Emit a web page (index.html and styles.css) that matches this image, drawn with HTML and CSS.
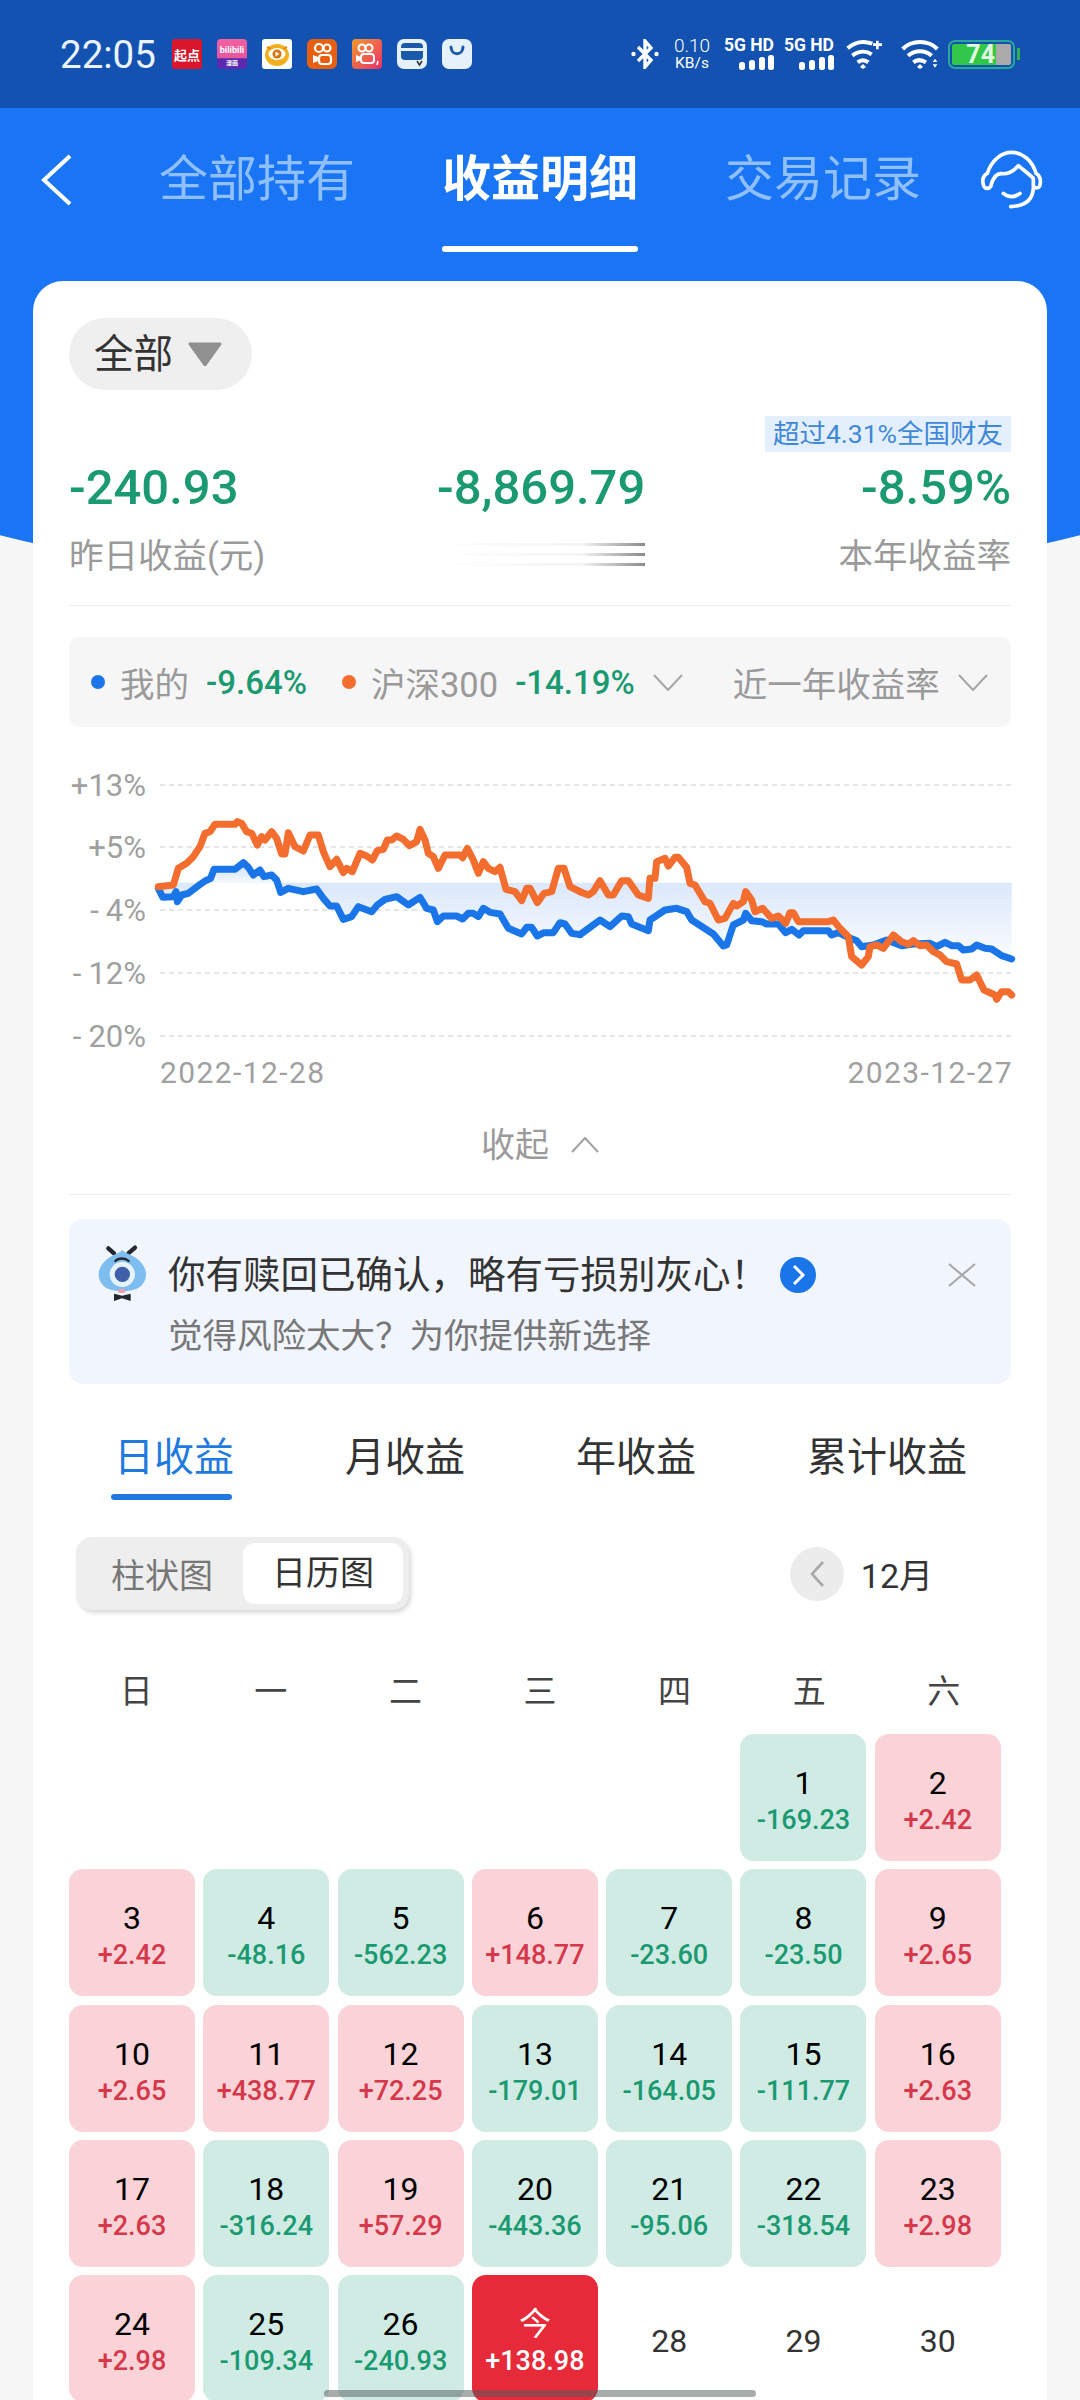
FILE: index.html
```html
<!DOCTYPE html>
<html lang="zh-CN">
<head>
<meta charset="utf-8">
<title>收益明细</title>
<link rel="stylesheet" href="styles.css">
</head>
<body>
<div class="page">

  <!-- status bar -->
  <div class="status">
    <span class="time">22:05</span>
    <div class="apps">
      <span class="app app-qd">起点</span>
      <span class="app app-bili"><i>bilibili</i><b>漫画</b></span>
      <svg class="app" viewBox="0 0 30 30"><rect width="30" height="30" rx="3" fill="#fff"/><ellipse cx="15" cy="16" rx="12" ry="11" fill="#f2b01e"/><path d="M5 8l4 2M25 8l-4 2" stroke="#e98b10" stroke-width="2"/><ellipse cx="15" cy="15" rx="8.500" ry="6" fill="#fff"/><circle cx="15" cy="15" r="4.500" fill="#d9740f"/><path d="M13.500 12.500v5l4-2.500z" fill="#fff"/></svg>
      <svg class="app" viewBox="0 0 30 30"><rect width="30" height="30" rx="6" fill="#e8600f"/><circle cx="12" cy="9" r="4" fill="none" stroke="#fff" stroke-width="2.200"/><circle cx="20" cy="9" r="3.500" fill="none" stroke="#fff" stroke-width="2.200"/><rect x="12" y="16" width="12" height="9" rx="3" fill="none" stroke="#fff" stroke-width="2.200"/><path d="M11 18l-5-2v8l5-2z" fill="#fff"/></svg>
      <svg class="app" viewBox="0 0 30 30"><defs><linearGradient id="ks" x1="0" y1="0" x2="1" y2="1"><stop offset="0" stop-color="#f29a2c"/><stop offset="1" stop-color="#ec2f6a"/></linearGradient></defs><rect width="30" height="30" rx="4" fill="url(#ks)"/><circle cx="10" cy="9" r="3.500" fill="none" stroke="#fff" stroke-width="2"/><circle cx="17" cy="9" r="3.500" fill="none" stroke="#fff" stroke-width="2"/><rect x="9" y="15" width="13" height="9" rx="3" fill="none" stroke="#fff" stroke-width="2"/><path d="M9 18l-5-2v7l5-2z" fill="#fff"/><path d="M26 22l-1 4" stroke="#fff" stroke-width="1.500"/></svg>
      <svg class="app" viewBox="0 0 30 30"><rect width="30" height="30" rx="7" fill="#e7f1fb"/><rect x="4" y="4" width="22" height="17" rx="4" fill="#1b5aa8"/><rect x="4" y="9" width="22" height="3" fill="#e7f1fb"/><path d="M20 22l2.500 4 2.500-4" fill="none" stroke="#333" stroke-width="1.500"/></svg>
      <svg class="app" viewBox="0 0 30 30"><rect width="30" height="30" rx="7" fill="#e7f1fb"/><path d="M9 8c0 9 12 9 12 0" fill="none" stroke="#1b5aa8" stroke-width="3" stroke-linecap="round"/></svg>
    </div>
    <div class="sys">
      <svg class="ic-bt" viewBox="0 0 28 30"><path d="M7 8l13 13-6 7V2l6 7L7 22" fill="none" stroke="#fff" stroke-width="3.400"/><circle cx="2.500" cy="15" r="2.200" fill="#fff"/><circle cx="25.500" cy="15" r="2.200" fill="#fff"/></svg>
      <div class="speed"><span>0.10</span><small>KB/s</small></div>
      <div class="sim"><span>5G HD</span><svg viewBox="0 0 35 15"><rect x="0" y="7" width="6" height="8" rx="2.500"/><rect x="10" y="5" width="6" height="10" rx="2.500"/><rect x="20" y="2" width="6" height="13" rx="2.500"/><rect x="29" y="0" width="6" height="15" rx="2.500"/></svg></div>
      <div class="sim"><span>5G HD</span><svg viewBox="0 0 35 15"><rect x="0" y="7" width="6" height="8" rx="2.500"/><rect x="10" y="5" width="6" height="10" rx="2.500"/><rect x="20" y="2" width="6" height="13" rx="2.500"/><rect x="29" y="0" width="6" height="15" rx="2.500"/></svg></div>
      <svg class="ic-wifi w1" viewBox="0 0 120 90"><path d="M8 28C30 8 55 4 82 14M22 50C40 36 62 34 80 46M38 70c10-8 22-8 32 0" fill="none" stroke="#fff" stroke-width="12"/><path d="M54 75l9 9-9 6-9-6z" fill="#fff"/><path d="M84 17h27M97 5v26" stroke="#fff" stroke-width="8"/></svg>
      <svg class="ic-wifi w2" viewBox="0 0 120 90"><path d="M8 30C35 2 85 2 112 30M24 50c21-18 51-18 71 0M40 70c10-8 25-8 38 0" fill="none" stroke="#fff" stroke-width="12"/><path d="M60 75l9 9-9 6-9-6z" fill="#fff"/><path d="M98 69h14l-7-10zM98 76h14l-7 10z" fill="#fff"/></svg>
      <div class="battery"><div class="bat-body"><span class="bat-fill">74</span><span class="bat-rest"></span></div><span class="bat-tip"></span></div>
    </div>
  </div>

  <!-- top nav -->
  <div class="nav">
    <svg class="back" viewBox="0 0 31 52"><path d="M29 2L3 26l26 24" fill="none" stroke="#fff" stroke-width="4"/></svg>
    <a class="nav-tab">全部持有</a>
    <a class="nav-tab on">收益明细</a>
    <a class="nav-tab">交易记录</a>
    <svg class="support" viewBox="0 0 240 210"><path d="M42 125C34 105 40 90 52 85 65 45 95 22 125 22c35 0 63 28 73 63 12 5 17 25 10 40-3 5-13 5-18 0v-25c-15-15-30-25-45-38-15 18-30 26-50 24-17-1-27 14-33 39-4 7-16 7-20 0z" fill="none" stroke="#fff" stroke-width="11" stroke-linejoin="round"/><path d="M190 130c-2 35-25 53-68 55M100 145c15 13 35 13 50 0" fill="none" stroke="#fff" stroke-width="11" stroke-linecap="round"/></svg>
  </div>

  <div class="card">
    <div class="pill"><span>全部</span><svg viewBox="0 0 36 24"><path d="M3 2h30L18 23z" fill="#909090" stroke="#909090" stroke-width="3" stroke-linejoin="round"/></svg></div>

    <div class="tag-row"><span class="tag">超过4.31%全国财友</span></div>

    <div class="stats">
      <div class="stat">
        <div class="val">-240.93</div>
        <div class="lab">昨日收益(元)</div>
      </div>
      <div class="stat">
        <div class="val">-8,869.79</div>
        <div class="blur"><i></i><i></i><i></i></div>
      </div>
      <div class="stat right">
        <div class="val">-8.59%</div>
        <div class="lab">本年收益率</div>
      </div>
    </div>

    <div class="legend">
      <span class="dot blue"></span><span class="lg-name">我的</span><span class="lg-val">-9.64%</span>
      <span class="dot orange"></span><span class="lg-name">沪深300</span><span class="lg-val">-14.19%</span>
      <svg class="chev" viewBox="0 0 30 17"><path d="M1 1l14 15L29 1" fill="none" stroke="#a6a6a6" stroke-width="2"/></svg>
      <span class="lg-name range">近一年收益率</span>
      <svg class="chev" viewBox="0 0 30 17"><path d="M1 1l14 15L29 1" fill="none" stroke="#a6a6a6" stroke-width="2"/></svg>
    </div>

    <!-- chart, drawn in page coordinates -->
    <svg class="chart" viewBox="69 727 950 383">
      <defs>
        <linearGradient id="area" gradientUnits="userSpaceOnUse" x1="0" y1="308" x2="0" y2="570"><stop offset="0" stop-color="#dbe8fa"/><stop offset="1" stop-color="#fff"/></linearGradient>
        <linearGradient id="hump" gradientUnits="userSpaceOnUse" x1="0" y1="268" x2="0" y2="310"><stop offset="0" stop-color="#d8e7fb"/><stop offset="1" stop-color="#f7faff"/></linearGradient>
      </defs>
      <g class="grid">
        <line x1="160" x2="1011" y1="785" y2="785"/>
        <line x1="160" x2="1011" y1="847" y2="847"/>
        <line x1="160" x2="1011" y1="910" y2="910"/>
        <line x1="160" x2="1011" y1="973" y2="973"/>
        <line x1="160" x2="1011" y1="1036" y2="1036"/>
      </g>
      <g class="axis">
        <text class="tick" x="146" y="796" text-anchor="end">+13%</text>
        <text class="tick" x="146" y="858" text-anchor="end">+5%</text>
        <text class="tick" x="146" y="921" text-anchor="end"><tspan>-</tspan><tspan dx="7">4%</tspan></text>
        <text class="tick" x="146" y="984" text-anchor="end"><tspan>-</tspan><tspan dx="7">12%</tspan></text>
        <text class="tick" x="146" y="1047" text-anchor="end"><tspan>-</tspan><tspan dx="7">20%</tspan></text>
        <text class="date" x="160" y="1083">2022-12-28</text>
        <text class="date" x="1013" y="1083" text-anchor="end">2023-12-27</text>
      </g>
      <g transform="translate(140 780) scale(.33333)">
        <polygon fill="url(#area)" points="55,308 55,325 68,352 100,350 108,335 112,365 125,345 145,340 175,317 195,303 212,295 222,268 285,268 310,248 325,262 340,285 360,270 372,290 395,285 410,300 422,337 445,325 490,335 530,327 550,355 570,378 590,378 610,418 635,410 655,380 695,395 712,375 735,358 770,350 805,375 840,352 860,385 880,390 892,425 910,408 950,408 968,417 985,400 1000,400 1015,410 1030,385 1050,397 1080,402 1105,445 1145,462 1160,442 1175,442 1192,468 1212,458 1240,458 1260,428 1275,432 1295,460 1320,464 1320,308"/>
        <polygon fill="url(#hump)" points="190,308 195,303 212,295 222,268 285,268 310,248 325,262 340,285 360,270 372,290 395,285 410,300 412,308"/>
      </g>
      <g transform="translate(580 780) scale(.33333)">
        <polygon fill="url(#area)" points="0,308 0,464 30,442 60,420 90,440 125,408 145,410 155,432 205,452 210,420 255,390 290,385 320,395 335,420 400,462 430,498 440,495 460,435 490,420 497,400 515,422 545,425 560,432 595,432 617,458 635,448 657,465 670,452 745,452 755,465 775,458 800,470 830,482 845,500 880,495 920,480 965,497 1000,492 1050,490 1070,500 1095,487 1115,497 1135,497 1150,510 1175,507 1190,495 1215,505 1235,507 1265,527 1295,537 1295,308"/>
      </g>
      <g class="line-blue">
        <polyline transform="translate(140 780) scale(.33333)" points="55,325 68,352 100,350 108,335 112,365 125,345 145,340 175,317 195,303 212,295 222,268 285,268 310,248 325,262 340,285 360,270 372,290 395,285 410,300 422,337 445,325 490,335 530,327 550,355 570,378 590,378 610,418 635,410 655,380 695,395 712,375 735,358 770,350 805,375 840,352 860,385 880,390 892,425 910,408 950,408 968,417 985,400 1000,400 1015,410 1030,385 1050,397 1080,402 1105,445 1145,462 1160,442 1175,442 1192,468 1212,458 1240,458 1260,428 1275,432 1295,460 1320,464"/>
        <polyline transform="translate(580 780) scale(.33333)" points="0,464 30,442 60,420 90,440 125,408 145,410 155,432 205,452 210,420 255,390 290,385 320,395 335,420 400,462 430,498 440,495 460,435 490,420 497,400 515,422 545,425 560,432 595,432 617,458 635,448 657,465 670,452 745,452 755,465 775,458 800,470 830,482 845,500 880,495 920,480 965,497 1000,492 1050,490 1070,500 1095,487 1115,497 1135,497 1150,510 1175,507 1190,495 1215,505 1235,507 1265,527 1295,537"/>
      </g>
      <g class="line-orange">
        <polyline transform="translate(140 780) scale(.33333)" points="55,320 100,315 115,265 140,250 160,230 180,200 195,160 210,155 225,133 285,133 292,125 305,130 320,155 335,160 352,195 365,170 375,180 395,155 410,175 425,222 435,222 445,158 465,200 490,213 510,165 535,165 550,215 570,260 590,238 610,278 620,265 637,275 660,220 680,228 697,240 712,212 730,208 742,180 755,180 770,168 790,178 808,197 830,185 840,148 855,180 865,220 880,230 895,265 915,225 960,225 968,233 982,205 1000,240 1015,280 1030,245 1045,265 1065,275 1080,262 1098,328 1125,335 1145,362 1160,325 1170,325 1192,368 1212,340 1235,335 1255,265 1272,265 1290,320 1320,335"/>
        <polyline transform="translate(580 780) scale(.33333)" points="0,335 25,345 40,335 60,302 85,345 100,345 125,302 145,302 175,345 205,355 210,295 225,295 230,245 255,235 265,258 285,232 295,232 320,262 330,310 345,315 375,365 390,370 415,420 435,415 460,370 470,378 490,365 497,335 515,360 525,395 548,385 575,415 595,408 617,430 630,398 640,398 655,425 745,425 760,420 780,445 805,470 815,530 845,555 865,530 870,500 890,495 910,505 940,465 965,485 985,493 1000,482 1020,497 1040,495 1060,515 1080,525 1100,545 1130,552 1145,600 1170,600 1190,585 1212,630 1245,645 1250,658 1265,635 1285,635 1295,645"/>
      </g>
    </svg>

    <div class="collapse"><span>收起</span><svg viewBox="0 0 28 16"><path d="M1 15L14 1l13 14" fill="none" stroke="#a0a0a0" stroke-width="2"/></svg></div>

    <div class="banner">
      <svg class="mascot" viewBox="0 0 210 225">
        <path d="M55 40l17 15M135 38l-20 17" stroke="#23262e" stroke-width="13" stroke-linecap="round"/>
        <path d="M97 45c8 10 35 16 52 33 30 30 22 64-5 82-26 12-68 12-94 0-27-18-35-52-5-82 17-17 44-23 52-33z" fill="#7dbdf0"/>
        <circle cx="97" cy="118" r="38" fill="#e6f2fc"/>
        <circle cx="97" cy="118" r="23" fill="#3f5fa8"/>
        <path d="M76 78c10-10 30-10 40 0" fill="none" stroke="#23262e" stroke-width="7" stroke-linecap="round"/>
        <rect x="84" y="162" width="22" height="12" rx="5" fill="#e6a2ae"/>
        <path d="M72 176l24 6 26-6v22l-26-8-24 8z" fill="#23262e"/>
      </svg>
      <div class="banner-text">
        <div class="banner-title"><span>你有赎回已确认，略有亏损别灰心！</span><svg viewBox="0 0 36 36"><circle cx="18" cy="18" r="18" fill="#1a75e8"/><path d="M14 9l9 9-9 9" fill="none" stroke="#fff" stroke-width="3"/></svg></div>
        <div class="banner-sub">觉得风险太大？为你提供新选择</div>
      </div>
      <svg class="close" viewBox="0 0 28 24"><path d="M1 1l26 22M27 1L1 23" stroke="#a9a9a9" stroke-width="2.200"/></svg>
    </div>

    <div class="tabs">
      <a class="tab on">日收益</a>
      <a class="tab">月收益</a>
      <a class="tab">年收益</a>
      <a class="tab">累计收益</a>
    </div>

    <div class="toolbar">
      <div class="seg"><span class="seg-item">柱状图</span><span class="seg-item on">日历图</span></div>
      <div class="month">
        <span class="month-arrow"><svg viewBox="0 0 16 28"><path d="M14 2L3 14l11 12" fill="none" stroke="#a8a8a8" stroke-width="2.600"/></svg></span>
        <span>12月</span>
      </div>
    </div>

    <div class="week">
      <span>日</span><span>一</span><span>二</span><span>三</span><span>四</span><span>五</span><span>六</span>
    </div>

    <div class="cal">
      <div class="cell none"></div><div class="cell none"></div><div class="cell none"></div><div class="cell none"></div><div class="cell none"></div>
      <div class="cell down"><b>1</b><span>-169.23</span></div>
      <div class="cell up"><b>2</b><span>+2.42</span></div>

      <div class="cell up"><b>3</b><span>+2.42</span></div>
      <div class="cell down"><b>4</b><span>-48.16</span></div>
      <div class="cell down"><b>5</b><span>-562.23</span></div>
      <div class="cell up"><b>6</b><span>+148.77</span></div>
      <div class="cell down"><b>7</b><span>-23.60</span></div>
      <div class="cell down"><b>8</b><span>-23.50</span></div>
      <div class="cell up"><b>9</b><span>+2.65</span></div>

      <div class="cell up"><b>10</b><span>+2.65</span></div>
      <div class="cell up"><b>11</b><span>+438.77</span></div>
      <div class="cell up"><b>12</b><span>+72.25</span></div>
      <div class="cell down"><b>13</b><span>-179.01</span></div>
      <div class="cell down"><b>14</b><span>-164.05</span></div>
      <div class="cell down"><b>15</b><span>-111.77</span></div>
      <div class="cell up"><b>16</b><span>+2.63</span></div>

      <div class="cell up"><b>17</b><span>+2.63</span></div>
      <div class="cell down"><b>18</b><span>-316.24</span></div>
      <div class="cell up"><b>19</b><span>+57.29</span></div>
      <div class="cell down"><b>20</b><span>-443.36</span></div>
      <div class="cell down"><b>21</b><span>-95.06</span></div>
      <div class="cell down"><b>22</b><span>-318.54</span></div>
      <div class="cell up"><b>23</b><span>+2.98</span></div>

      <div class="cell up"><b>24</b><span>+2.98</span></div>
      <div class="cell down"><b>25</b><span>-109.34</span></div>
      <div class="cell down"><b>26</b><span>-240.93</span></div>
      <div class="cell today"><b>今</b><span>+138.98</span></div>
      <div class="cell later"><b>28</b></div>
      <div class="cell later"><b>29</b></div>
      <div class="cell later"><b>30</b></div>
    </div>
  </div>

  <div class="home-bar"></div>
</div>
</body>
</html>
```

FILE: styles.css
```css
* {
  box-sizing: border-box;
}

body {
  margin: 0;
  font-family: Roboto, "Noto Sans CJK SC", sans-serif;
  background-color: #f6f6f7;
}

.page {
  position: relative;
  width: 1080px;
  height: 2400px;
  overflow: hidden;
}

/* blue backdrop with the curved bottom edge */
.page::before {
  content: "";
  position: absolute;
  left: -160px;
  top: 0;
  width: 1400px;
  height: 589px;
  background-color: #1a75f5;
  border-radius: 0 0 700px 700px / 0 0 148px 148px;
}

/* status bar */
.status {
  position: relative;
  display: flex;
  align-items: center;
  height: 108px;
  padding-left: 60px;
  background-color: #1352b0;
  color: #fff;
}

.time {
  width: 112px;
  font-size: 38.5px;
  color: #eaf3ff;
}

.apps {
  display: flex;
  gap: 15px;
}

.app {
  display: flex;
  flex-direction: column;
  align-items: center;
  justify-content: center;
  width: 30px;
  height: 30px;
  overflow: hidden;
}

.app-qd {
  background-color: #d9162c;
  border-radius: 3px;
  font-size: 13px;
  font-weight: 700;
  white-space: nowrap;
}

.app-bili {
  background: linear-gradient(#f2609f 0, #ea55a0 62%, #5a2bb0 66%);
  border-radius: 4px;
  line-height: 1;
}

.app-bili i {
  font-style: normal;
  font-size: 9px;
  font-weight: 700;
  margin-top: 3px;
}

.app-bili b {
  font-size: 6px;
  margin-top: 5px;
}

.sys {
  display: flex;
  align-items: center;
  margin-left: 159px;
}

.ic-bt {
  width: 28px;
  height: 30px;
}

.speed {
  display: flex;
  flex-direction: column;
  align-items: center;
  width: 36px;
  margin-left: 15px;
  font-weight: 300;
  line-height: 1;
}

.speed span {
  font-size: 19px;
}

.speed small {
  font-size: 15.5px;
  font-weight: 400;
  margin-top: 1px;
}

.sim {
  display: flex;
  flex-direction: column;
  align-items: flex-end;
  width: 48px;
  margin-left: 16px;
  font-size: 17.5px;
  font-weight: 700;
  line-height: 15px;
  white-space: nowrap;
}

.sim + .sim {
  margin-left: 12px;
}

.sim svg {
  width: 35px;
  height: 15px;
  margin-top: 2px;
  fill: #fff;
}

.ic-wifi {
  width: 40px;
  height: 30px;
}

.w1 {
  margin-left: 11px;
}

.w2 {
  margin-left: 15px;
}

.battery {
  display: flex;
  align-items: center;
  margin-left: 8px;
}

.bat-body {
  display: flex;
  width: 67px;
  height: 29px;
  padding: 2px;
  border: 2px solid #2aa896;
  border-radius: 7px;
}

.bat-fill {
  width: 44px;
  padding-right: 1px;
  background-color: #31c84a;
  border-radius: 2px 0 0 2px;
  color: #e3f8e0;
  font-size: 25px;
  font-weight: 700;
  line-height: 21px;
  text-align: right;
}

.bat-rest {
  flex: 1;
  background-color: #aaaaaa;
  border-radius: 0 2px 2px 0;
}

.bat-tip {
  width: 3px;
  height: 12px;
  margin-left: 2px;
  background-color: #2fb24a;
}

/* nav */
.nav {
  position: relative;
  display: flex;
  align-items: flex-start;
  height: 173px;
  padding: 41px 0 0 41px;
}

.back {
  width: 31px;
  height: 52px;
  margin: 5px 87px 0 0;
}

.nav-tab {
  width: 196px;
  margin-right: 87px;
  color: #90c0fb;
  font-size: 49px;
  line-height: 62px;
  white-space: nowrap;
}

.nav-tab.on {
  color: #fff;
  font-weight: 700;
}

.nav-tab.on::after {
  content: "";
  display: block;
  height: 6px;
  margin-top: 35px;
  background-color: #fff;
  border-radius: 3px;
}

.support {
  width: 80px;
  height: 70px;
  margin: -4px 0 0 -38px;
}

/* card */
.card {
  position: relative;
  height: 2119px;
  margin: 0 33px;
  padding: 37px 36px 0;
  background-color: #fff;
  border-radius: 30px 30px 0 0;
}

.pill {
  display: flex;
  align-items: center;
  width: 183px;
  height: 72px;
  padding-left: 25px;
  background-color: #efefef;
  border-radius: 36px;
  color: #333;
  font-size: 39.5px;
}

.pill span {
  margin-top: -7px;
}

.pill svg {
  width: 36px;
  height: 24px;
  margin-left: 14px;
}

.tag-row {
  display: flex;
  justify-content: flex-end;
  margin-top: 26px;
}

.tag {
  height: 36px;
  padding: 0 8px;
  background-color: #e3effc;
  color: #3f88d8;
  font-size: 26.5px;
  line-height: 36px;
  white-space: nowrap;
}

.stats {
  display: grid;
  grid-template-columns: 368px auto 1fr;
  padding-bottom: 27px;
  margin-top: 6px;
  border-bottom: 1.5px solid #eeeeee;
}

.stat.right {
  text-align: right;
}

.val {
  color: #1b9a72;
  font-size: 49px;
  font-weight: 500;
  line-height: 60px;
  white-space: nowrap;
}

.lab {
  margin-top: 16px;
  color: #9a9a9a;
  font-size: 34.5px;
  line-height: 44px;
  white-space: nowrap;
}

.blur {
  display: flex;
  flex-direction: column;
  gap: 7px;
  margin: 25px 0 0 -3px;
}

.blur i {
  display: block;
  height: 3px;
  background: linear-gradient(to right, rgba(170, 170, 170, 0), rgba(170, 170, 170, .12) 70%, #8a8a8a);
}

.legend {
  display: flex;
  align-items: center;
  height: 90px;
  margin-top: 31px;
  padding-left: 22px;
  background-color: #f6f6f6;
  border-radius: 10px;
  font-size: 34.5px;
  white-space: nowrap;
}

.dot {
  width: 14px;
  height: 14px;
  border-radius: 50%;
}

.dot.blue {
  background-color: #1a75e8;
}

.dot.orange {
  margin-left: 35px;
  background-color: #f26d2e;
}

.lg-name {
  margin: 0 17px 0 15px;
  color: #9a9a9a;
}

.lg-val {
  color: #1b9a72;
  font-size: 33px;
  font-weight: 500;
}

.chev {
  width: 30px;
  height: 17px;
  margin-left: 18px;
}

.range {
  margin: 0 0 0 50px;
}

.chart {
  display: block;
  width: 950px;
  height: 383px;
}

.grid line {
  stroke: #dddddd;
  stroke-width: 1.5;
  stroke-dasharray: 5 4;
}

.axis text {
  fill: #a0a0a0;
  font-size: 30px;
}

.axis .tick {
  font-size: 31px;
}

.axis .date {
  letter-spacing: 1.4px;
}

.line-blue polyline,
.line-orange polyline {
  fill: none;
  stroke-width: 21;
  stroke-linejoin: round;
  stroke-linecap: round;
}

.line-blue polyline {
  stroke: #1a75e8;
}

.line-orange polyline {
  stroke: #f26d2e;
}

.collapse {
  display: flex;
  align-items: center;
  justify-content: center;
  padding: 13px 0 27px 0;
  border-bottom: 1.5px solid #eeeeee;
  color: #9a9a9a;
  font-size: 34px;
  line-height: 44px;
}

.collapse svg {
  width: 28px;
  height: 16px;
  margin-left: 22px;
}

.banner {
  display: flex;
  align-items: flex-start;
  height: 165px;
  margin-top: 24px;
  padding: 16px 35px 0 21px;
  background-color: #f1f5fe;
  border-radius: 14px;
}

.mascot {
  flex: none;
  width: 70px;
  height: 75px;
}

.banner-text {
  margin: 15px 0 0 8px;
}

.banner-title {
  display: flex;
  align-items: center;
  color: #333;
  font-size: 37.5px;
  line-height: 50px;
  white-space: nowrap;
}

.banner-title svg {
  width: 36px;
  height: 36px;
  margin-left: 12px;
}

.banner-sub {
  margin-top: 14px;
  color: #777;
  font-size: 34.5px;
  line-height: 44px;
  white-space: nowrap;
}

.close {
  width: 28px;
  height: 24px;
  margin: 28px 0 0 auto;
}

.tabs {
  display: flex;
  gap: 111px;
  margin-top: 46px;
  padding-left: 45px;
}

.tab {
  color: #333;
  font-size: 40px;
  line-height: 56px;
  white-space: nowrap;
}

.tab.on {
  color: #1f7ae0;
}

.tab.on::after {
  content: "";
  display: block;
  width: 121px;
  height: 6px;
  margin: 8px 0 0 -3px;
  background-color: #1f7ae0;
  border-radius: 3px;
}

.tab:not(.on) {
  padding-bottom: 14px;
}

.toolbar {
  display: flex;
  align-items: center;
  justify-content: space-between;
  margin-top: 37px;
  padding: 0 78px 0 7px;
}

.seg {
  display: flex;
  align-items: center;
  justify-content: space-between;
  width: 333px;
  height: 73px;
  padding: 6px 6px 6px 35px;
  background-color: #eeeeee;
  border-radius: 16px;
  box-shadow: 2px 3px 4px rgba(0, 0, 0, .15);
  color: #777;
  font-size: 34px;
}

.seg-item.on {
  width: 160px;
  height: 61px;
  background-color: #fff;
  border-radius: 12px;
  color: #333;
  line-height: 61px;
  text-align: center;
}

.month {
  display: flex;
  align-items: center;
  gap: 17px;
  color: #333;
  font-size: 34px;
}

.month-arrow {
  display: flex;
  align-items: center;
  justify-content: center;
  width: 54px;
  height: 54px;
  background-color: #ececec;
  border-radius: 50%;
}

.month-arrow svg {
  width: 16px;
  height: 28px;
}

.week {
  display: grid;
  grid-template-columns: repeat(7, 1fr);
  margin-top: 60px;
  color: #444;
  font-size: 33px;
  line-height: 44px;
  text-align: center;
}

.cal {
  display: grid;
  grid-template-columns: repeat(7, 126px);
  grid-auto-rows: 127px;
  gap: 8.3px;
  margin-top: 20px;
}

.cell {
  display: flex;
  flex-direction: column;
  align-items: center;
  padding-top: 31px;
  border-radius: 14px;
  line-height: 36px;
}

.cell b {
  color: #000;
  font-size: 32px;
  font-weight: 400;
}

.cell span {
  margin-top: 1px;
  font-size: 27px;
  font-weight: 500;
}

.cell.up {
  background-color: #f9d3d7;
  color: #d4384a;
}

.cell.down {
  background-color: #d0ebe3;
  color: #1b9a72;
}

.cell.today {
  background-color: #e62a3a;
  color: #fff;
}

.cell.today b {
  color: #fff;
}

.cell.later {
  justify-content: center;
  padding-top: 4px;
}

.cell.later b {
  color: #333;
}

.home-bar {
  position: absolute;
  left: 324px;
  top: 2390px;
  width: 432px;
  height: 7px;
  background-color: rgba(80, 90, 90, .5);
  border-radius: 4px;
}
```
